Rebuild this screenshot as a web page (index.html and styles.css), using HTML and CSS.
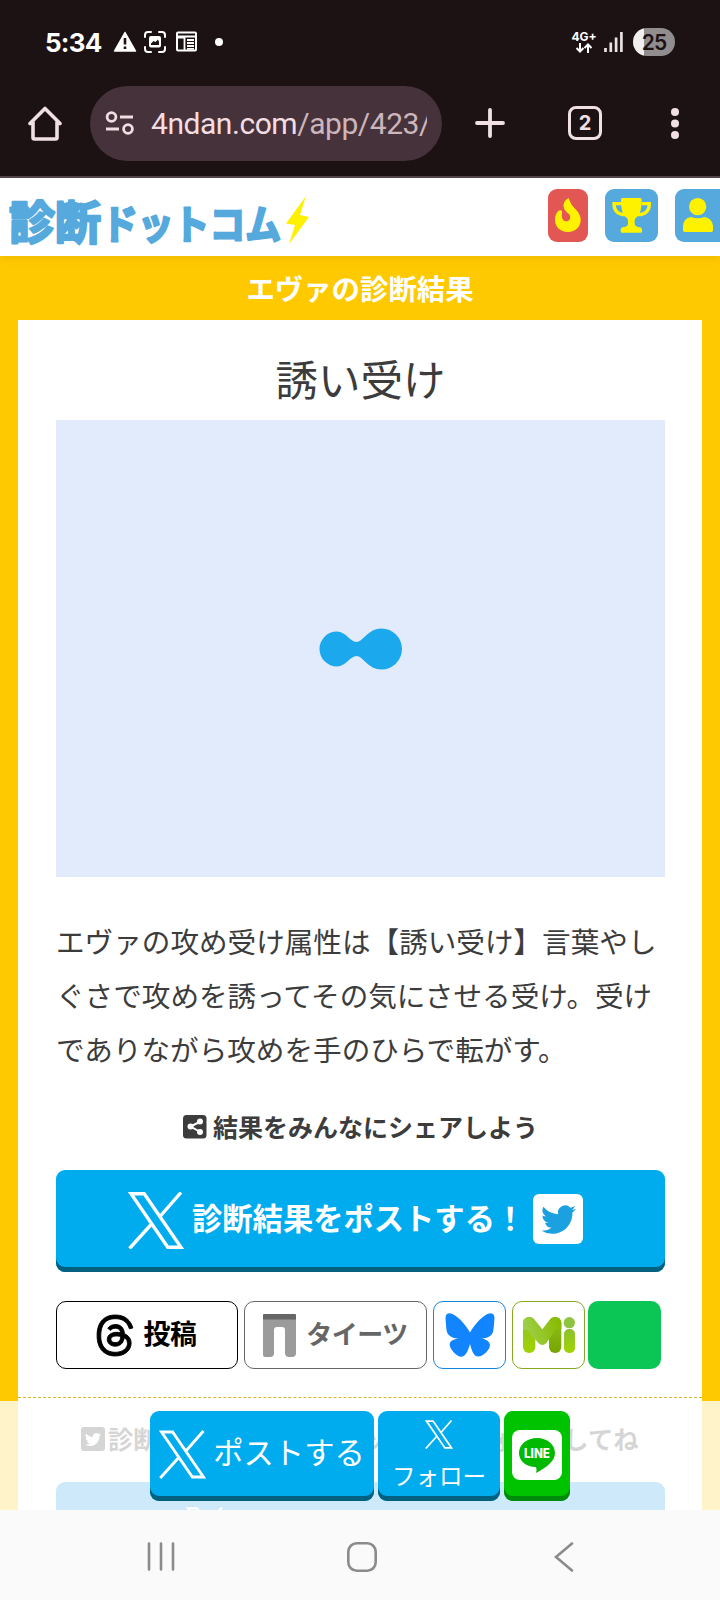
FILE: index.html
```html
<!DOCTYPE html>
<html lang="ja">
<head>
<meta charset="utf-8">
<title>エヴァの診断結果</title>
<link rel="stylesheet" href="styles.css">
</head>
<body>
<svg class="defs" width="0" height="0">
  <symbol id="x" viewBox="0 0 56 57"><path fill="none" stroke="currentColor" stroke-width="3.4" d="M3 1.700H16.2L53 55.300H39.8ZM53 .5 31.5 25M1.5 56.5 24 31.5"/></symbol>
  <symbol id="bird" viewBox="0 0 16 16"><path fill="currentColor" d="M5.026 15c6.038 0 9.341-5.003 9.341-9.334q.002-.211-.006-.422A6.7 6.7 0 0 0 16 3.542a6.7 6.7 0 0 1-1.889.518 3.3 3.3 0 0 0 1.447-1.817 6.5 6.5 0 0 1-2.087.793A3.286 3.286 0 0 0 7.875 6.03a9.32 9.32 0 0 1-6.767-3.429 3.29 3.29 0 0 0 1.018 4.382A3.3 3.3 0 0 1 .64 6.575v.045a3.29 3.29 0 0 0 2.632 3.218 3.2 3.2 0 0 1-.865.115 3 3 0 0 1-.614-.057 3.28 3.28 0 0 0 3.067 2.277A6.6 6.6 0 0 1 .78 13.58a6 6 0 0 1-.78-.045A9.34 9.34 0 0 0 5.026 15"/></symbol>
</svg>
<div class="phone">
  <div class="status">
    <span class="clock">5:34</span>
    <svg class="st-icons" width="112" height="24" viewBox="0 0 112 24">
      <path fill="#fff" stroke="#fff" stroke-width="1.5" stroke-linejoin="round" d="M12 2.5 22.5 21H1.5Z"/>
      <path stroke="#1c1214" stroke-width="2.6" d="M12 8v6.5M12 16.5v2.6"/>
      <path fill="none" stroke="#fff" stroke-width="2" stroke-linecap="round" d="M32 7V5q0-3 3-3h3M46 2h3q3 0 3 3v2M52 17v2q0 3-3 3h-3M38 22h-3q-3 0-3-3v-2"/>
      <rect x="36" y="6" width="12" height="11.5" rx="2" fill="#fff"/>
      <path fill="#1c1214" d="M38 15v-1.500l2.500-2.500 2 1 2.500-2.500L46 12v3Z"/>
      <rect x="64" y="2.500" width="19" height="18" rx="1" fill="none" stroke="#fff" stroke-width="2"/>
      <path fill="none" stroke="#fff" stroke-width="1.800" d="M64 6.500h19M71.500 6.500v14M64 7.500h7M74 10h7M74 13h7M74 16h7M74 18.800h7"/>
      <circle cx="106" cy="12" r="4" fill="#fff"/>
    </svg>
    <span class="grow"></span>
    <span class="net"><span>4G+</span>
      <svg width="18" height="10" viewBox="0 0 18 10"><path fill="none" stroke="#fff" stroke-width="2" d="M5 0v8.500M1.500 5 5 8.500 8.500 5M13 10V1.500M9.500 5 13 1.500 16.500 5"/></svg></span>
    <svg class="signal" width="19" height="20" viewBox="0 0 19 20"><path stroke="#e9e1e3" stroke-width="2.700" d="M1.500 16v4M6.800 10.500v9.500M12.100 5.500v14.500M17.400 0v20"/></svg>
    <span class="battery">25</span>
  </div>
  <div class="toolbar">
    <svg class="home" width="34" height="35" viewBox="0 0 34 35"><path fill="none" stroke="#f0e0e4" stroke-width="3.600" stroke-linejoin="round" stroke-linecap="round" d="M2 17.500 17 2.500 32 17.500M5 16v15.500q0 1.500 1.500 1.500h21q1.500 0 1.500-1.500V16"/></svg>
    <div class="omnibox">
      <svg width="30" height="24" viewBox="0 0 30 24"><g fill="none" stroke="#f0dde2" stroke-width="2.800"><circle cx="6.500" cy="6" r="4.400"/><circle cx="23" cy="18" r="4.400"/><path d="M15 6h13M1 18h13"/></g></svg>
      <span class="url">4ndan.com<span class="path">/app/423/</span></span>
    </div>
    <svg class="plus" width="30" height="30" viewBox="0 0 30 30"><path stroke="#f0e0e4" stroke-width="3.800" stroke-linecap="round" d="M15 2v26M2 15h26"/></svg>
    <span class="tabs">2</span>
    <svg class="dots" width="8" height="31" viewBox="0 0 8 31" fill="#f0e0e4"><circle cx="4" cy="4" r="4"/><circle cx="4" cy="15.500" r="4"/><circle cx="4" cy="27" r="4"/></svg>
  </div>

  <div class="page">
    <header class="site">
      <svg class="logo" width="310" height="60" viewBox="0 0 310 60">
        <g class="logo-text"><text x="1" y="47.500" font-size="46" textLength="92" lengthAdjust="spacingAndGlyphs">診断</text><text x="94" y="48" font-size="40" textLength="179" lengthAdjust="spacingAndGlyphs">ドットコム</text></g>
        <path fill="#fff000" d="M298 5 278 32.500l9 1.500-6 19 20-27-9-2Z"/>
      </svg>
      <nav class="tiles">
        <span class="tile hot"><svg width="40" height="53" viewBox="0 0 120 159"><path fill="#fff200" d="M62 27C70 50 75 52 85 63 95 74 99 85 98 96 96 116 80 129 60 129 38 129 21 114 21 92 21 78 27 68 35 64 41 62 43 66 42 72 40 86 44 96 54 97 64 97 68 88 66 80 63 72 49 68 47 54 45 42 52 32 62 27Z"/></svg></span>
        <span class="tile"><svg width="53" height="53" viewBox="0 0 159 159"><g fill="none" stroke="#fff200" stroke-width="10"><path d="M50 44H27Q27 76 62 77M110 44h23q0 32-35 33"/></g><path fill="#fff200" d="M52 27h54q4 0 4 6c0 30-6 46-17 53-4 3-4 8-4 12v8q2 8 16 9 6 1 6 8v5q0 3-4 3H51q-4 0-4-3v-5q0-7 6-8 14-1 16-9v-8c0-4 0-9-4-12C54 79 48 63 48 33q0-6 4-6Z"/></svg></span>
        <span class="tile"><svg width="53" height="53" viewBox="0 0 159 159" fill="#fff200"><circle cx="68" cy="53" r="26"/><path d="M24 124V112Q25 88 48 84q20 8 40 0 24 4 26 28v12q0 5-5 5H29q-5 0-5-5Z"/></svg></span>
      </nav>
    </header>
    <main class="frame">
      <h1>エヴァの診断結果</h1>
      <div class="card">
        <section class="result">
          <h2>誘い受け</h2>
          <div class="photo"><svg width="84" height="42" viewBox="0 0 84 42"><path fill="#1ca8ec" d="M18 3.500C27 3.500 31 14 37.500 14 44 14 49 .5 62.500 .5a20.500 20.500 0 0 1 0 41C49 41.500 44 28 37.500 28 31 28 27 38.500 18 38.500a17.500 17.500 0 0 1 0-35Z"/></svg></div>
          <p class="desc">エヴァの攻め受け属性は【誘い受け】言葉やしぐさで攻めを誘ってその気にさせる受け。受けでありながら攻めを手のひらで転がす。</p>
          <div class="share-title"><svg width="24" height="24" viewBox="0 0 24 24"><rect width="23.500" height="23.500" rx="3.500" fill="#3c3c3c"/><path fill="none" stroke="#fff" stroke-width="2" d="M16.500 7 7.500 11.500 16.500 16.500"/><g fill="#fff"><circle cx="17" cy="6.500" r="3"/><circle cx="7.500" cy="11.500" r="3"/><circle cx="17" cy="17" r="3"/></g></svg><span>結果をみんなにシェアしよう</span></div>
          <a class="post"><svg class="big-x" width="56" height="57"><use href="#x"/></svg><span>診断結果をポストする！</span><i class="bird-box"><svg width="35" height="35"><use href="#bird"/></svg></i></a>
          <div class="socials">
            <a class="soc threads"><svg width="38" height="43" viewBox="0.600 -0.400 14.800 16.800"><path stroke="#000" stroke-width=".35" d="M6.321 6.016c-.27-.18-1.166-.802-1.166-.802.756-1.081 1.753-1.502 3.132-1.502.975 0 1.803.327 2.394.948s.928 1.509 1.005 2.644q.492.207.905.484c1.109.745 1.719 1.860 1.719 3.137 0 2.716-2.226 5.075-6.256 5.075C4.594 16 1 13.987 1 7.994 1 2.034 4.482 0 8.044 0 9.690 0 13.550.243 15 5.036l-1.360.353C12.516 1.974 10.163 1.430 8.006 1.430c-3.565 0-5.582 2.171-5.582 6.790 0 4.143 2.254 6.343 5.630 6.343 2.777 0 4.847-1.443 4.847-3.556 0-1.438-1.208-2.127-1.270-2.127-.236 1.234-.868 3.310-3.644 3.310-1.618 0-3.013-1.118-3.013-2.582 0-2.090 1.984-2.847 3.550-2.847.586 0 1.294.040 1.663.114 0-.637-.540-1.728-1.900-1.728-1.250 0-1.566.405-1.967.868ZM8.716 8.190c-2.040 0-2.304.870-2.304 1.416 0 .878 1.043 1.168 1.600 1.168 1.020 0 2.067-.282 2.232-2.423a6.200 6.200 0 0 0-1.528-.161"/></svg><span>投稿</span></a>
            <a class="soc taittsu"><svg width="33" height="43" viewBox="0 0 33 43"><path fill="#9b9b9b" d="M0 3h33v36q0 4-4 4h-3q-4 0-4-4V16q0-3-3-3h-5q-3 0-3 3v23q0 4-4 4H2q-2 0-2-2Z"/><path fill="#666" d="M1 0h31q1 0 1 1v4.500H0V1q0-1 1-1Z"/></svg><span>タイーツ</span></a>
            <a class="soc sky"><svg width="50" height="44" viewBox="0 1.200 24 21.600"><path fill="#1285fe" d="M12 10.800c-1.087-2.114-4.046-6.053-6.798-7.995C2.566.944 1.561 1.266.902 1.565.139 1.908 0 3.080 0 3.768c0 .690.378 5.650.624 6.479.815 2.736 3.713 3.660 6.383 3.364-3.912.580-7.387 2.005-2.830 7.078 5.013 5.190 6.870-1.113 7.823-4.308.953 3.195 2.050 9.271 7.733 4.308 4.267-4.308 1.172-6.498-2.740-7.078 2.670.297 5.568-.628 6.383-3.364.246-.828.624-5.790.624-6.478 0-.690-.139-1.861-.902-2.206-.659-.298-1.664-.620-4.300 1.240C16.046 4.748 13.087 8.687 12 10.800Z"/></svg></a>
            <a class="soc misskey"><svg width="52" height="36" viewBox="0 0 156 108"><defs><linearGradient id="g1" x1="0" y1="0" x2="0" y2="1"><stop offset="0" stop-color="#8cc030"/><stop offset="1" stop-color="#a0d400"/></linearGradient><linearGradient id="g2" x1="0" y1="0" x2="0" y2="1"><stop offset="0" stop-color="#8cc01c"/><stop offset="1" stop-color="#78a600"/></linearGradient><linearGradient id="g3" gradientUnits="userSpaceOnUse" x1="0" y1="40" x2="110" y2="10"><stop offset="0" stop-color="#a0d04c"/><stop offset="1" stop-color="#86bb00"/></linearGradient></defs><rect y="0" width="37" height="108" rx="18" fill="url(#g1)"/><rect x="78" width="37" height="108" rx="18" fill="url(#g2)"/><path fill="url(#g3)" d="M0 38V18C0 0 22-6 33 6L58 37 82 6C94-6 115 0 115 18V36H100L70 78Q58 90 46 78L12 38Z"/><circle cx="139" cy="17" r="17" fill="#8fc440"/><rect x="123" y="36" width="33" height="72" rx="15" fill="url(#g1)"/></svg></a>
            <a class="soc line-plain"></a>
          </div>
        </section>
        <section class="follow">
          <div class="follow-title"><i class="mini-bird"><svg width="16" height="16"><use href="#bird"/></svg></i><span>診断ドットコムのツイッターをフォローしてね</span></div>
          <a class="follow-btn"><svg width="38" height="39"><use href="#x"/></svg></a>
        </section>
      </div>
    </main>
    <div class="dock">
      <a class="dk wide"><svg width="47" height="49"><use href="#x"/></svg><span>ポストする</span></a>
      <a class="dk stack"><svg width="28" height="29"><use href="#x"/></svg><span>フォロー</span></a>
      <a class="dk line"><svg width="50" height="50" viewBox="0 0 50 50"><rect width="50" height="50" rx="8" fill="#fff"/><path fill="#00b900" d="M25 8c10 0 18 6.500 18 15 0 8-8 14-19 20q1-4 0-6C14 37 7 31 7 23 7 14.500 15 8 25 8Z"/><text class="line-word" x="25" y="28" text-anchor="middle" textLength="26" lengthAdjust="spacingAndGlyphs">LINE</text></svg></a>
    </div>
  </div>

  <div class="navbar">
    <svg width="28" height="29" viewBox="0 0 28 29"><path stroke="#8b8b8b" stroke-width="2.600" stroke-linecap="round" d="M2 1.500v26M14 1.500v26M26 1.500v26"/></svg>
    <svg class="nav-home" width="30" height="30" viewBox="0 0 30 30"><rect x="1.300" y="1.300" width="27.400" height="27.400" rx="8.500" fill="none" stroke="#8b8b8b" stroke-width="2.600"/></svg>
    <svg width="20" height="30" viewBox="0 0 20 30"><path fill="none" stroke="#8b8b8b" stroke-width="2.600" stroke-linecap="round" d="M18 1.500 2 15l16 13.500"/></svg>
  </div>
</div>
</body>
</html>
```
FILE: styles.css
```css
* { box-sizing: border-box; }
body { margin: 0; font-family: "Noto Sans CJK JP", sans-serif; color: #3c3c3c; }
svg { display: block; flex: none; }
.defs { position: absolute; }
.phone { width: 720px; height: 1600px; overflow: hidden; display: flex; flex-direction: column; background: #fff; }

.status { height: 86px; flex: none; background: #1c1214; color: #fff; display: flex; align-items: center; padding: 0 45px 2px 45px; font-family: Inter, sans-serif; }
.clock { width: 67px; font-size: 26px; font-weight: 700; letter-spacing: -.8px; white-space: nowrap; }
.st-icons { margin-left: 1px; }
.grow { flex: 1; }
.net { display: flex; flex-direction: column; align-items: center; font-size: 12px; font-weight: 700; line-height: 12px; width: 24px; margin-right: 8px; }
.signal { margin-right: 10px; }
.battery { width: 42px; height: 28px; border-radius: 14px; background: linear-gradient(90deg, #f0eeee 25%, #918d8e 25%); color: #1c1214; font-size: 21px; font-weight: 600; line-height: 29px; letter-spacing: -1px; text-align: center; }

.toolbar { height: 92px; flex: none; background: #1c1214; border-bottom: 2px solid #54454a; display: flex; align-items: center; padding: 0 41px 16px 28px; }
.omnibox { width: 352px; height: 75px; margin-left: 28px; border-radius: 38px; background: #46323a; display: flex; align-items: center; padding: 0 15px; gap: 16px; }
.url { width: 277px; overflow: hidden; white-space: nowrap; font-family: Roboto, sans-serif; font-size: 30px; letter-spacing: -.45px; color: #f3dde3; }
.path { color: #cdb5bc; }
.plus { margin-left: 33px; }
.tabs { width: 34px; height: 34px; margin-left: 63px; border: 3.500px solid #f0e0e4; border-radius: 8px; color: #f0e0e4; font: 700 20px/28px Inter, sans-serif; text-align: center; }
.dots { margin-left: auto; }

.page { position: relative; flex: 1; overflow: hidden; background: #ffc900; }
.site { height: 78px; background: #fff; display: flex; padding-left: 8px; box-shadow: 0 2px 8px rgba(90, 80, 0, .12); position: relative; }
.logo { margin-top: 13px; }
.logo-text { fill: #55a9dd; stroke: #55a9dd; stroke-width: 2.400; stroke-linejoin: round; font-weight: 700; }
.tiles { display: flex; gap: 17px; margin: 11px 0 0 230px; }
.tile { flex: none; height: 53px; border-radius: 9px; background: #55a9dd; }
.tile.hot { background: #e25654; }

.frame { padding: 0 18px; }
h1 { margin: 0; height: 64px; line-height: 64px; text-align: center; font-size: 28.400px; font-weight: 700; color: #fff; }
.card { background: #fff; height: 1190px; }
.result { padding: 0 37px 0 38px; height: 1078px; border-bottom: 1px dashed #d9b81e; }
h2 { margin: 0; padding-top: 26px; height: 100px; line-height: 64px; font-size: 42.500px; font-weight: 400; text-align: center; }
.photo { height: 457px; padding-top: 1px; background: #e2ebfc; display: flex; align-items: center; justify-content: center; }
.desc { margin: 37px 0 0; font-size: 28.600px; line-height: 54px; word-break: break-all; }
.share-title { display: flex; align-items: center; justify-content: center; gap: 6px; height: 36px; margin-top: 33px; font-size: 25px; font-weight: 700; white-space: nowrap; }
.share-title span { padding-bottom: 2px; }
.post { display: flex; align-items: center; height: 102px; margin-top: 25px; padding: 0 0 5px 72px; border-radius: 9px; background: #00acee; box-shadow: inset 0 -5px #00607f; color: #fff; font-size: 30.300px; font-weight: 700; white-space: nowrap; }
.big-x { margin-top: 4px; }
.post span { margin-left: 8px; width: 341px; padding-bottom: 3px; }
.bird-box { width: 50px; height: 50px; border-radius: 6px; background: #fff; color: #1ba1e0; display: flex; align-items: center; justify-content: center; }
.socials { display: flex; margin-top: 29px; gap: 6px; }
.soc { height: 68px; width: 73px; border: 1px solid #000; border-radius: 10px; display: flex; align-items: center; justify-content: center; font-weight: 700; font-size: 27px; white-space: nowrap; letter-spacing: -.5px; }
.soc span { padding-bottom: 6px; }
.threads { width: 182px; color: #000; gap: 10px; padding-right: 2px; }
.taittsu { width: 183px; border-color: #666; color: #666; gap: 10px; font-size: 26px; }
.sky { border-color: #1285dd; }
.misskey { border-color: #86a81c; }
.line-plain { background: #0bc655; border: 0; margin-left: -3px; }

.follow { padding: 0 37px 0 38px; }
.follow-title { display: flex; align-items: center; gap: 3px; height: 84px; padding: 0 0 2px 25px; font-size: 25.300px; font-weight: 700; white-space: nowrap; }
.follow-title span { padding-bottom: 2px; }
.mini-bird { width: 24px; height: 24px; border-radius: 3px; background: #3c3c3c; color: #fff; display: flex; align-items: center; justify-content: center; }
.follow-btn { display: block; height: 90px; padding: 25px 130px; border-radius: 9px; background: #1899e0; color: #fff; }

.dock { position: absolute; left: 0; right: 0; bottom: 0; height: 109px; padding: 10px 0 0 150px; display: flex; gap: 4px; background: rgba(255, 255, 255, .79); }
.dk { height: 90px; border-radius: 9px; background: #00acee; box-shadow: inset 0 -5px #00607f; color: #fff; display: flex; align-items: center; justify-content: center; padding-bottom: 4px; white-space: nowrap; }
.wide { width: 224px; gap: 7px; font-size: 30.300px; }
.wide span { padding-bottom: 7px; }
.stack { width: 122px; flex-direction: column; justify-content: flex-start; padding-top: 9px; font-size: 23.500px; line-height: 34px; gap: 9px; }
.line { width: 66px; padding-bottom: 3px; background: #00c300; box-shadow: inset 0 -5px #008a0b; }
.line-word { fill: #fff; font: 800 12.500px Inter, sans-serif; }

.navbar { height: 90px; flex: none; background: #fafafa; display: flex; align-items: center; justify-content: space-between; padding: 3px 146px 0 147px; }
.nav-home { margin: 0 2px 0 -3px; }
```
